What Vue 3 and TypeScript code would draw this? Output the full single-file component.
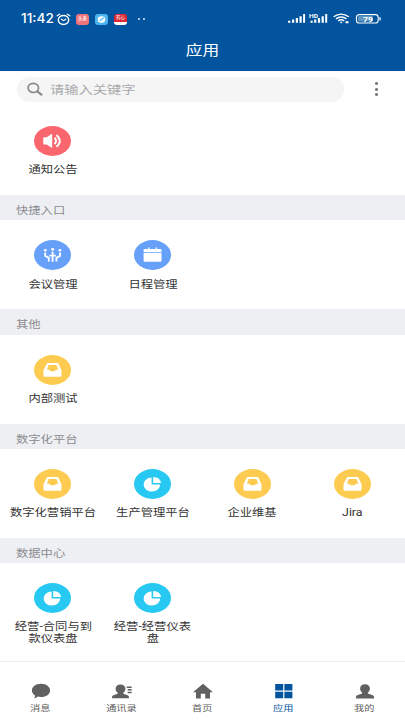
<script setup lang="ts">
type IconName = 'speaker' | 'meeting' | 'calendar' | 'inbox' | 'pie'
interface AppItem { icon: IconName; lines: string[] }
interface Group { title?: string; items: AppItem[] }
interface Tab { icon: 'chat' | 'contacts' | 'home' | 'apps' | 'me'; label: string; active?: boolean }

const groups: Group[] = [
  { items: [{ icon: 'speaker', lines: ['通知公告'] }] },
  { title: '快捷入口', items: [{ icon: 'meeting', lines: ['会议管理'] }, { icon: 'calendar', lines: ['日程管理'] }] },
  { title: '其他', items: [{ icon: 'inbox', lines: ['内部测试'] }] },
  {
    title: '数字化平台',
    items: [
      { icon: 'inbox', lines: ['数字化营销平台'] },
      { icon: 'pie', lines: ['生产管理平台'] },
      { icon: 'inbox', lines: ['企业维基'] },
      { icon: 'inbox', lines: ['Jira'] },
    ],
  },
  {
    title: '数据中心',
    items: [
      { icon: 'pie', lines: ['经营-合同与到', '款仪表盘'] },
      { icon: 'pie', lines: ['经营-经营仪表', '盘'] },
    ],
  },
]

const tabs: Tab[] = [
  { icon: 'chat', label: '消息' },
  { icon: 'contacts', label: '通讯录' },
  { icon: 'home', label: '首页' },
  { icon: 'apps', label: '应用', active: true },
  { icon: 'me', label: '我的' },
]
</script>

<template>
  <div class="screen">
    <header class="top">
      <div class="status">
        <div class="status-left">
          <span class="clock"><span class="wide">11:42</span></span>
          <svg class="alarm" width="15" height="13" viewBox="0 0 15 13" fill="none" stroke="#fff" stroke-linecap="round">
            <ellipse cx="7.5" cy="7" rx="5.2" ry="4.5" stroke-width="1.4" />
            <path d="M1.2 2.8 3.6 1.2M13.8 2.8 11.4 1.2" stroke-width="1.3" />
            <path d="M5.4 6.2 7.5 7.7 9.8 6.2" stroke-width="1.1" />
          </svg>
          <span class="badge coral"><span class="tiny">头条</span></span>
          <span class="badge sky">
            <svg width="13" height="11" viewBox="0 0 13 11"><ellipse cx="6.5" cy="5.6" rx="3.8" ry="3.3" fill="#fff" /><path d="M4.8 6.8 8.8 3.8" stroke="#4bb5ee" stroke-width="1.2" /></svg>
          </span>
          <span class="badge red"><span class="tiny">有心</span></span>
          <span class="more-dots"><i /><i /></span>
        </div>
        <svg class="signals" width="96" height="16" viewBox="0 0 96 16" fill="#fff">
          <path d="M1 11.8h2.4v2H1zM5 10.6h2.2v3.2H5zM8.8 9h2.2v4.8H8.8zM12.5 7.2h2.2v6.6h-2.2zM16.1 5h2v8.8h-2z" />
          <path d="M23.5 11.8h2.2v2h-2.2zM27.1 10.6h2.2v3.2h-2.2zM30.9 9h2.2v4.8h-2.2zM34.6 7.2h2.2v6.6h-2.2zM38.2 5h2v8.8h-2z" />
          <text x="22" y="8.6" font-size="5" font-weight="700" textLength="9" lengthAdjust="spacingAndGlyphs">HD</text>
          <g fill="none" stroke="#fff" stroke-width="1.4">
            <path d="M46.6 7.8Q54.2 2.5 61.8 7.8M48.9 9.9Q54.2 6.2 59.5 9.9M51.2 11.9Q54.2 9.7 57.2 11.9" />
            <rect x="69.4" y="5.6" width="21.8" height="8.4" rx="2.8" stroke-width="1.1" />
          </g>
          <path d="M52.7 12.8h3l-1.5 1.6zM58.5 12.3h3v2h-3zM92.4 8.2h1.3v3.2h-1.3z" />
          <rect x="70.9" y="7" width="15" height="5.6" rx="1.4" opacity=".38" />
          <text x="76" y="12.5" font-size="7.4" font-weight="700" textLength="10" lengthAdjust="spacingAndGlyphs">79</text>
        </svg>
      </div>
      <h1><span class="wide">应用</span></h1>
    </header>

    <div class="search-row">
      <div class="search">
        <svg width="16" height="14" viewBox="0 0 16 14" fill="none" stroke="#88888a">
          <ellipse cx="6.3" cy="5.9" rx="5.2" ry="4.6" stroke-width="1.7" />
          <path d="M10.2 9.3 14.4 12.6" stroke-width="2.1" stroke-linecap="round" />
        </svg>
        <span class="wide from-left">请输入关键字</span>
      </div>
      <div class="menu"><i /><i /><i /></div>
    </div>

    <main>
      <section v-for="(g, gi) in groups" :key="gi">
        <h2 v-if="g.title"><span class="wide from-left">{{ g.title }}</span></h2>
        <div class="grid">
          <div v-for="(a, ai) in g.items" :key="ai" class="app">
            <div class="disc" :class="a.icon">
              <svg width="37" height="30" viewBox="0 0 37 30" fill="#fff">
                <template v-if="a.icon === 'speaker'">
                  <path d="M9.3 12q0-.8.8-.8h2.6L17.2 8.2q1-.6 1 .4v12.6q0 1-1 .4l-4.5-3h-2.6q-.8 0-.8-.8z" />
                  <path d="M20.6 11.8q3 3.1 0 6.2M22.4 9q6.8 5.9 0 11.8" fill="none" stroke="#fff" stroke-width="2" />
                </template>
                <template v-else-if="a.icon === 'meeting'">
                  <ellipse cx="18.6" cy="9.2" rx="1.6" ry="1.3" />
                  <ellipse cx="11.3" cy="10.3" rx="1.4" ry="1.2" />
                  <ellipse cx="25.9" cy="10.3" rx="1.4" ry="1.2" />
                  <path d="M18.6 11.6v10.2M15.4 15.7h6.4M11.2 12.6v3.3l3.6 2v3.7M26 12.6v3.3l-3.6 2v3.7" fill="none" stroke="#fff" stroke-width="1.8" />
                </template>
                <template v-else-if="a.icon === 'calendar'">
                  <path d="M10.4 8.9H14V7.6h1.5v1.3h6.1V7.6h1.5v1.3h3.6q.8 0 .8.8v2.5H9.6V9.7q0-.8.8-.8zM9.6 13h17.9v7.8q0 .9-.9.9H10.5q-.9 0-.9-.9z" />
                </template>
                <path v-else-if="a.icon === 'inbox'" fill-rule="evenodd" d="M14 8.1h9.2q1 0 1.4.9l2.9 6.3v5.2q0 1.2-1.2 1.2H10.7q-1.2 0-1.2-1.2v-5.2L12.6 9q.4-.9 1.4-.9zM14.7 10.1 12.9 14.7h2.4l1.1 1.6h4.4l1.1-1.6h2.4L22.5 10.1z" />
                <template v-else>
                  <path d="M17.6 8.6v7h8.6a8.3 7 0 1 1-8.6-7z" />
                  <path d="M19.2 7.9q7.4.6 7.9 6.2h-7.9z" />
                </template>
              </svg>
            </div>
            <p><span v-for="l in a.lines" :key="l" class="wide">{{ l }}</span></p>
          </div>
        </div>
      </section>
    </main>

    <nav>
      <div v-for="t in tabs" :key="t.label" class="tab" :class="{ active: t.active }">
        <svg width="22" height="16" viewBox="0 0 22 16" fill="currentColor">
          <path v-if="t.icon === 'chat'" d="M11 .8c5.1 0 9.1 2.9 9.1 6.6s-4 6.6-9.1 6.6q-1.7 0-3.1-.4Q6 15.4 4 15.3q1.2-1.3 1.1-2.9Q1.9 10.5 1.9 7.4C1.9 3.7 5.9.8 11 .8z" />
          <template v-else-if="t.icon === 'contacts'">
            <path d="M9.5 1.4c3 0 4.9 1.8 4.9 4.3 0 1.7-.8 3.1-2 3.9v1.1l4.2 1.6q1.4.6 1.4 2v1H1v-1q0-1.4 1.4-2l4.2-1.6V9.6C5.4 8.8 4.6 7.4 4.6 5.7c0-2.5 1.9-4.3 4.9-4.3z" />
            <path d="M15.7 3.5h5V5h-5zM16.7 6.1h4v1.5h-4zM16.7 8.7h4v1.5h-4z" />
          </template>
          <path v-else-if="t.icon === 'home'" d="M11 .7 21 9.3h-3v6.2h-4.8v-4.7H8.8v4.7H4V9.3H1z" />
          <path v-else-if="t.icon === 'apps'" d="M2.2 1h8v6.6h-8zM11.4 1h8v6.6h-8zM2.2 8.8h8v6.5h-8zM11.4 8.8h8v6.5h-8z" />
          <path v-else d="M11 1.2c3 0 4.9 1.8 4.9 4.3 0 1.7-.8 3.1-2 3.9v1.2l4.8 1.7q1.4.6 1.4 2v1.1H1.9v-1.1q0-1.4 1.4-2l4.8-1.7V9.4c-1.2-.8-2-2.2-2-3.9 0-2.5 1.9-4.3 4.9-4.3z" />
        </svg>
        <span class="wide">{{ t.label }}</span>
      </div>
    </nav>
  </div>
</template>

<style>
body { background: #fff; }
</style>

<style scoped>
* { box-sizing: border-box; margin: 0; padding: 0; }
.screen {
  width: 405px; height: 720px; display: flex; flex-direction: column; overflow: hidden;
  background: #fff; color: #333; font-family: Roboto, "Noto Sans CJK SC", sans-serif;
}
/* Glyphs on this display are wider than they are tall. */
.wide { display: inline-block; white-space: nowrap; transform: scaleX(1.23); }
.from-left { transform-origin: left center; }
svg { display: block; flex: none; }

.top { height: 70.5px; flex: none; background: #01549d; color: #fff; }
.status { height: 38px; display: flex; justify-content: space-between; padding: 0 20px 0 21px; }
.status-left { display: flex; align-items: center; }
.clock { width: 35px; font: 500 12.4px/38px Inter, Roboto, sans-serif; }
.clock .wide { transform: scaleX(1.1); transform-origin: left; }
.alarm { margin-right: 5px; }
.badge { width: 13px; height: 11px; border-radius: 3px; margin-right: 6px; display: flex; align-items: center; justify-content: center; overflow: hidden; }
.coral { background: #f1747c; }
.sky { background: #4bb5ee; }
.red { background: linear-gradient(#dc2735 72%, #fff 72%); }
.tiny { font-size: 4.5px; line-height: 6px; font-weight: 500; white-space: nowrap; opacity: .9; }
.red .tiny { padding-bottom: 2px; }
.more-dots { display: flex; gap: 3px; margin-left: 5px; }
.more-dots i { width: 2px; height: 2px; border-radius: 50%; background: #dce8f3; }
.signals { margin-top: 9.4px; margin-right: -2px; transform: translateX(-4px); font-family: Roboto, sans-serif; }
h1 { text-align: center; font-size: 13.6px; font-weight: 400; line-height: 24px; }

.search-row { height: 35.6px; flex: none; display: flex; align-items: flex-start; padding: 6.5px 0 0 16.5px; }
.search { width: 327px; height: 24.5px; border-radius: 13px / 12px; background: #f5f5f5; display: flex; align-items: center; gap: 7.4px; padding-left: 10px; color: #aaaaac; font-size: 11.6px; }
.menu { margin: 5.3px 0 0 31px; display: flex; flex-direction: column; gap: 2.8px; }
.menu i { width: 3.6px; height: 2.8px; border-radius: 50%; background: #777; }

main { flex: 1; min-height: 0; }
h2 { height: 25.2px; background: #eeeff3; color: #8b8b90; font-size: 10px; font-weight: 400; padding-left: 16px; overflow: hidden; }
h2 .wide { line-height: 31px; }
.grid { height: 89.1px; padding: 20px 0 0 3px; display: grid; grid-template-columns: repeat(4, 99.8px); align-items: start; }
.app { display: flex; flex-direction: column; align-items: center; }
.disc { width: 37px; height: 30px; border-radius: 50%; }
.speaker { background: #fa666d; }
.meeting, .calendar { background: #66a0f8; }
.inbox { background: #fdcb50; }
.pie { background: #27c8f1; }
p { display: flex; flex-direction: column; align-items: center; margin-top: 8.2px; font-size: 10px; line-height: 12px; }

nav { height: 59.5px; flex: none; display: flex; border-top: 1px solid #ededed; background: #fff; }
.tab { flex: 1; display: flex; flex-direction: column; align-items: center; padding-top: 21.5px; color: #606060; font-size: 8.3px; line-height: 12px; gap: 3.1px; }
.tab .wide { height: 12px; }
.tab.active { color: #01549d; }
</style>
